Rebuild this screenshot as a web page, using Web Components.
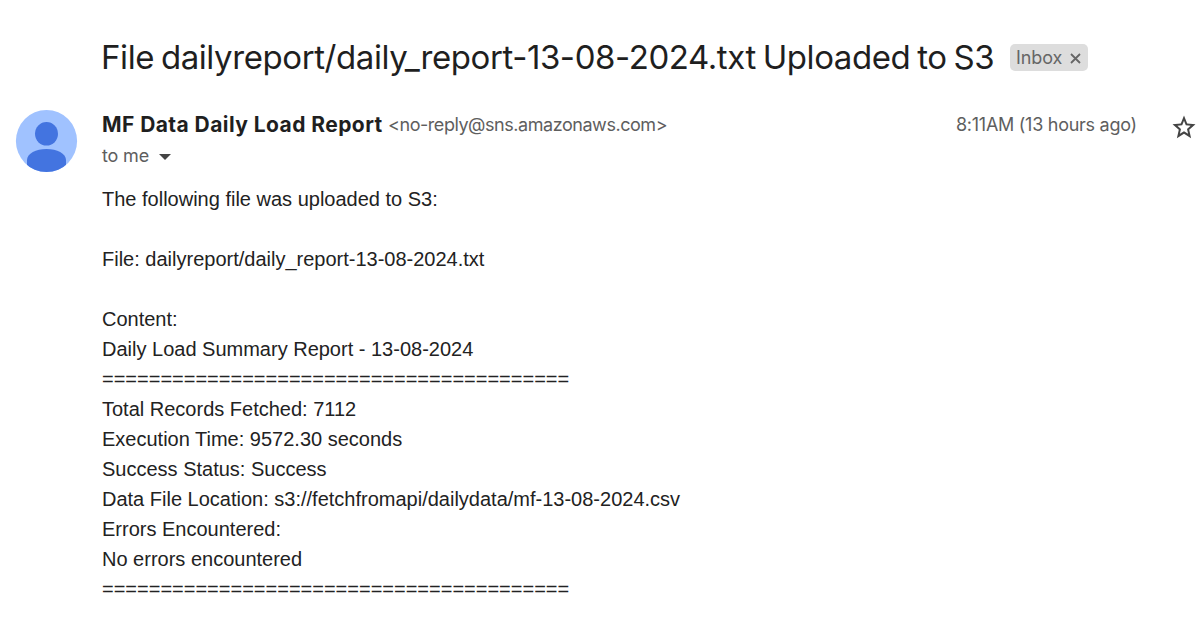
<!DOCTYPE html>
<html lang="en"><head><meta charset="utf-8"><title>Daily report mail</title>
<style>body{margin:0;background:#fff;overflow:hidden}</style></head>
<body>
<mail-message>
<mail-subject slot="subject">File dailyreport/daily_report-13-08-2024.txt Uploaded to S3</mail-subject>
<mail-label slot="subject">Inbox</mail-label>
<mail-avatar slot="avatar"></mail-avatar>
<mail-sender slot="header"><span>MF Data Daily Load Report</span><span slot="email">&lt;no-reply@sns.amazonaws.com&gt;</span><span slot="to">to me</span></mail-sender>
<mail-date slot="header">8:11AM (13 hours ago)</mail-date>
<mail-body slot="body">The following file was uploaded to S3:

File: dailyreport/daily_report-13-08-2024.txt

Content:
Daily Load Summary Report - 13-08-2024
========================================
Total Records Fetched: 7112
Execution Time: 9572.30 seconds
Success Status: Success
Data File Location: s3://fetchfromapi/dailydata/mf-13-08-2024.csv
Errors Encountered:
No errors encountered
========================================</mail-body>
</mail-message>
<script>
const define = (name, html) => customElements.define(name, class extends HTMLElement {
  constructor() { super(); this.attachShadow({mode: 'open'}).innerHTML = html; }
});
define('mail-message', `<style>
:host{display:grid;grid-template-columns:102px 1fr;width:1201px;height:618px;box-sizing:border-box;font-family:Inter,sans-serif;color:#1f1f1f;grid-template-rows:110px 74px auto}
.subject{grid-column:2;display:flex;align-items:flex-start;padding-top:36px;gap:16px}
.avatar{grid-column:1;padding-left:15px}
.header{grid-column:2;display:flex;justify-content:space-between}
.body{grid-column:2}
</style>
<div class="subject"><slot name="subject"></slot></div>
<div class="avatar"><slot name="avatar"></slot></div>
<div class="header"><slot name="header"></slot></div>
<div class="body"><slot name="body"></slot></div>`);
define('mail-subject', `<style>:host{display:block;width:893px;margin-left:-1px;font-size:33px;font-weight:400;line-height:42px;letter-spacing:-.42px;word-spacing:-2px;white-space:nowrap}</style><slot></slot>`);
define('mail-label', `<style>:host{display:flex;align-items:center;box-sizing:border-box;width:78px;height:27px;margin-top:8px;padding-left:6px;gap:8px;border-radius:5px;background:#ddd;color:#666;font-size:18px;letter-spacing:-.1px;line-height:27px}
svg{display:block;margin-top:2px}</style><slot></slot><svg width="11" height="11" viewBox="0 0 11 11"><path d="M1 1l9 9M10 1l-9 9" stroke="#666" stroke-width="1.8"/></svg>`);
define('mail-avatar', `<style>:host{display:block}svg{display:block}</style>
<svg width="63" height="62" viewBox="0 0 63 62"><defs><clipPath id="c"><ellipse cx="31.5" cy="31" rx="30.6" ry="31"/></clipPath></defs><g clip-path="url(#c)"><path fill="#a0c2ff" d="M0 0h63v62H0z"/><ellipse cx="31.5" cy="23.800" rx="11.5" ry="11.800" fill="#4374e0"/><path fill="#4374e0" d="M12 62V50c0-6.500 9-11 19.500-11S51 43.500 51 50v12z"/></g></svg>`);
define('mail-sender', `<style>:host{display:block;white-space:nowrap}
.line{display:flex;line-height:30px}
.name{width:286px;font-size:21px;font-weight:680;letter-spacing:.43px}
.mail{font-size:18px;letter-spacing:-.45px;color:#5e5e5e}
.to{display:flex;align-items:center;gap:10px;font-size:18px;letter-spacing:-.15px;line-height:30px;color:#5e5e5e;margin-top:1px}
svg{display:block;margin-top:1px}</style>
<div class="line"><span class="name"><slot></slot></span><span class="mail"><slot name="email"></slot></span></div>
<div class="to"><slot name="to"></slot><svg width="12" height="6" viewBox="0 0 12 6"><path d="M0 0h12L6 6z" fill="#444"/></svg></div>`);
define('mail-date', `<style>:host{display:flex;align-items:flex-start;font-size:18px;line-height:30px;letter-spacing:-.27px;color:#5e5e5e;white-space:nowrap;padding-right:5px}
span{width:216px}svg{display:block;margin-top:5px}</style><span><slot></slot></span>
<svg width="24" height="24" viewBox="0 0 24 24"><path fill="#444" fill-rule="evenodd" d="M23.500 9.200l-8.300-.7L12 .500 8.800 8.500l-8.300.7 6.300 5.500L4.900 23.200 12 18.700l7.100 4.500-1.900-8.500zM12 16.200l-4.100 2.500 1.100-4.800-3.600-3.200 4.800-.4L12 5.800l1.800 4.500 4.800.4-3.600 3.200 1.100 4.800z"/></svg>`);
define('mail-body', `<style>:host{display:block;white-space:pre;font:20px/30px "Liberation Sans",Arial,sans-serif;color:#222}</style><slot></slot>`);
</script>
</body></html>
